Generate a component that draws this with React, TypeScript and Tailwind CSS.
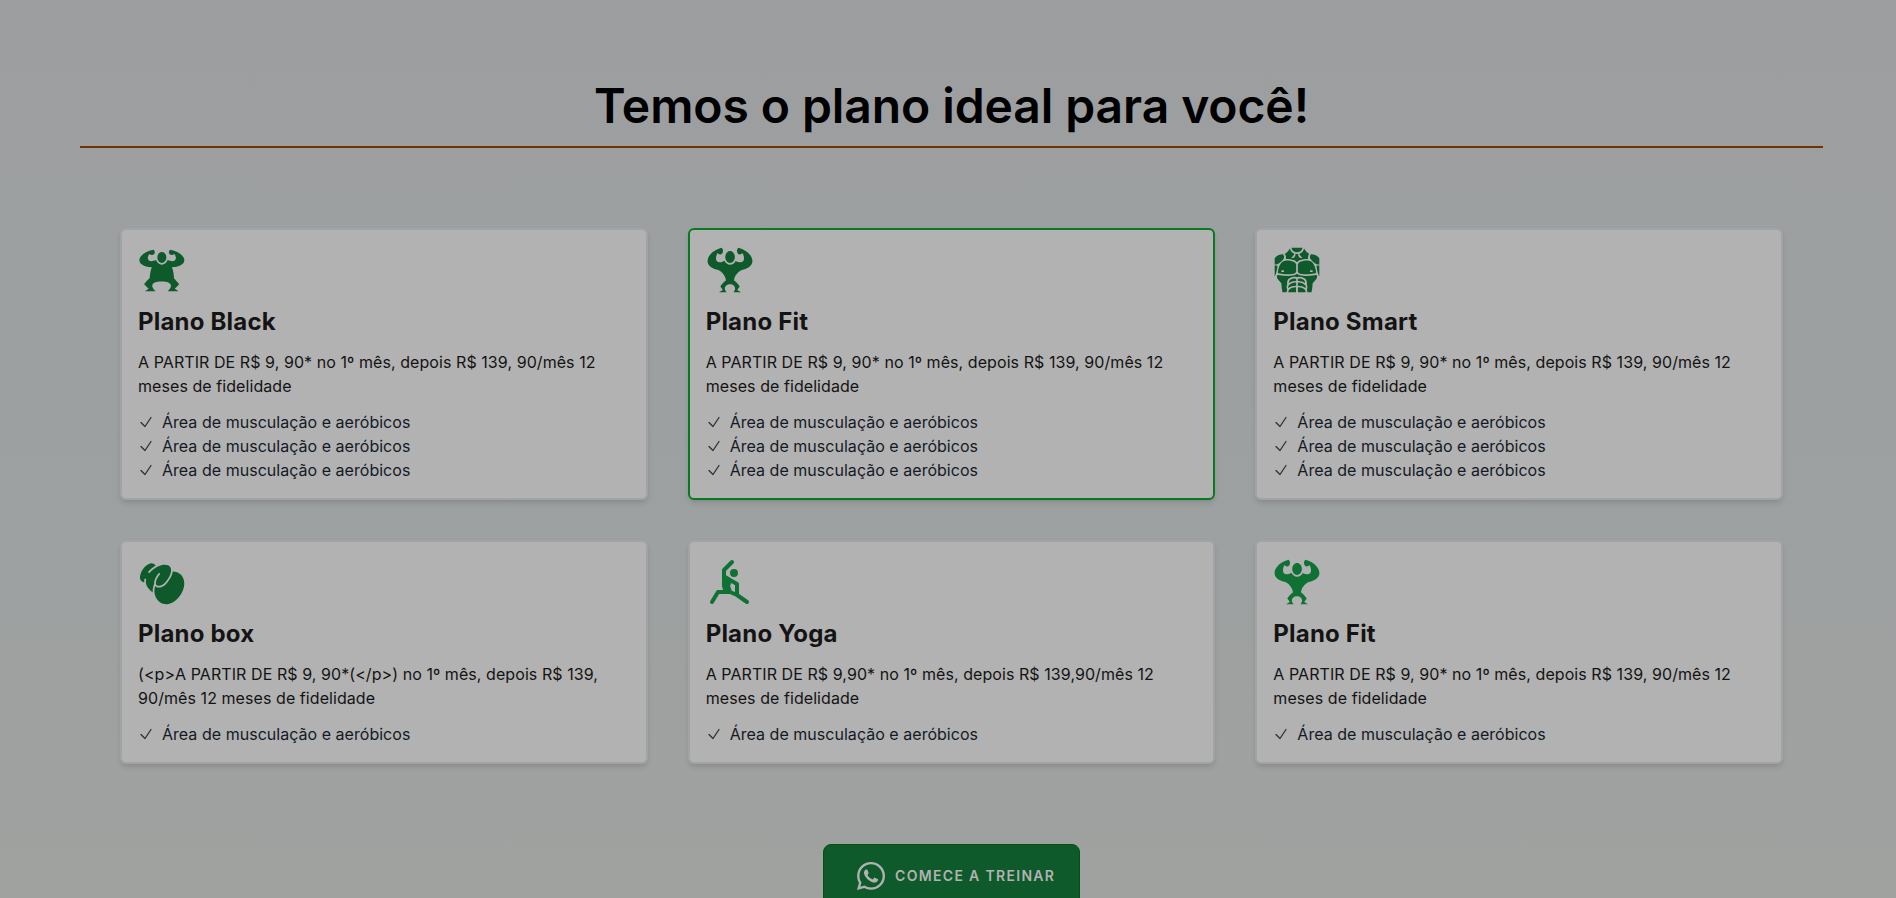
import type { IconType } from 'react-icons';
import { FaWhatsapp } from 'react-icons/fa';
import { GiBoxingGlove, GiMuscleFat, GiMuscularTorso, GiMuscleUp } from 'react-icons/gi';
import { GrYoga } from 'react-icons/gr';
import { HiOutlineCheck } from 'react-icons/hi2';

interface Plan {
  icon: IconType;
  iconClass: string;
  title: string;
  description: string;
  benefits: string[];
  featured?: boolean;
}

const BENEFIT = 'Área de musculação e aeróbicos';
const DESCRIPTION = 'A PARTIR DE R$ 9, 90* no 1º mês, depois R$ 139, 90/mês 12 meses de fidelidade';

const PLANS: Plan[] = [
  { icon: GiMuscleFat, iconClass: 'text-[#0f5a2b]', title: 'Plano Black', description: DESCRIPTION, benefits: [BENEFIT, BENEFIT, BENEFIT] },
  { icon: GiMuscleUp, iconClass: 'text-[#0f5a2b]', title: 'Plano Fit', description: DESCRIPTION, benefits: [BENEFIT, BENEFIT, BENEFIT], featured: true },
  { icon: GiMuscularTorso, iconClass: 'text-[#0f5a2b]', title: 'Plano Smart', description: DESCRIPTION, benefits: [BENEFIT, BENEFIT, BENEFIT] },
  { icon: GiBoxingGlove, iconClass: 'text-[#0f5a2b]', title: 'Plano box', description: '(<p>A PARTIR DE R$ 9, 90*(</p>) no 1º mês, depois R$ 139, 90/mês 12 meses de fidelidade', benefits: [BENEFIT] },
  { icon: GrYoga, iconClass: 'text-[#0f7234] [&_*]:stroke-[#0f7234]', title: 'Plano Yoga', description: 'A PARTIR DE R$ 9,90* no 1º mês, depois R$ 139,90/mês 12 meses de fidelidade', benefits: [BENEFIT] },
  { icon: GiMuscleUp, iconClass: 'text-[#0f7234]', title: 'Plano Fit', description: DESCRIPTION, benefits: [BENEFIT] },
];

function PlanCard({ icon: Icon, iconClass, title, description, benefits, featured }: Plan) {
  return (
    <div
      className={`rounded-md border-2 bg-[#b2b2b2] p-4 shadow-md ${
        featured ? 'border-[#067a20]' : 'border-[#a1a3a6]'
      }`}
    >
      <Icon className={`w-12 h-12 ${iconClass}`} />
      <h3 className="mt-3 text-2xl font-bold tracking-[0.2px] text-[#141414]">{title}</h3>
      <p className="mt-3 text-base tracking-[0.07px] text-[#141414]">{description}</p>
      <ul className="mt-3 text-base tracking-[0.03px] text-[#141a26]">
        {benefits.map((benefit, i) => (
          <li key={i} className="flex items-center gap-2">
            <HiOutlineCheck className="w-4 h-4 text-[#30343c] [&_path]:stroke-2" />
            {benefit}
          </li>
        ))}
      </ul>
    </div>
  );
}

export default function App() {
  return (
    <div className="h-[898px] overflow-hidden bg-linear-to-b from-[#9c9ea0] via-[#9da0a1] to-[#a0a2a0] font-['Inter',sans-serif]">
      {/* The section is a little wider than the window */}
      <section className="w-[1903px] px-20 pt-[82px]">
        <h2 className="border-b-2 border-[#6e3500] pb-4 text-center text-5xl font-semibold tracking-[-0.08px] text-black">
          Temos o plano ideal para você!
        </h2>

        <div className="mt-20 px-10 grid grid-cols-3 items-start gap-10">
          {PLANS.map((plan, i) => (
            <PlanCard key={i} {...plan} />
          ))}
        </div>

        <div className="mt-20 flex justify-center">
          <button className="flex h-16 w-[257px] items-center gap-2 rounded-lg border border-[#065010] bg-[#0f5a2b] pl-[31px] pr-6 text-sm font-semibold uppercase tracking-[1.32px] text-[#b2b2b2]">
            <FaWhatsapp className="w-8 h-8 shrink-0" />
            <span className="whitespace-nowrap">Comece a treinar</span>
          </button>
        </div>
      </section>
    </div>
  );
}
